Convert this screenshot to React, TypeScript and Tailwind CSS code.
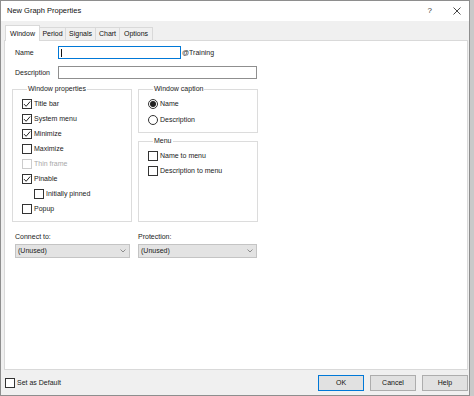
import type { ReactNode } from "react";

const FONT = "font-[family-name:Liberation_Sans,Arial,sans-serif]";

function Box({ checked, disabled }: { checked?: boolean; disabled?: boolean }) {
  return (
    <span
      className={`flex h-[10px] w-[10px] shrink-0 items-center justify-center border bg-white ${
        disabled ? "border-[#cccccc]" : "border-[#333333]"
      }`}
    >
      {checked ? (
        <svg width="8" height="8" viewBox="0 0 8 8" aria-hidden>
          <path d="M1 4.1 L3.1 6.3 L7.2 1.5" fill="none" stroke="#222222" strokeWidth="1" />
        </svg>
      ) : null}
    </span>
  );
}

function Check({
  label,
  checked,
  disabled,
  indent,
}: {
  label: string;
  checked?: boolean;
  disabled?: boolean;
  indent?: boolean;
}) {
  return (
    <div className={`flex h-[15px] items-center gap-[2px] ${indent ? "pl-[12px]" : ""}`}>
      <Box checked={checked} disabled={disabled} />
      <span className={disabled ? "text-[#a8a8a8]" : "text-[#1a1a1a]"}>{label}</span>
    </div>
  );
}

function Radio({ label, checked }: { label: string; checked?: boolean }) {
  return (
    <div className="flex h-[16px] items-center gap-[2px]">
      <span className="flex h-[10px] w-[10px] items-center justify-center rounded-full border border-[#333333] bg-white">
        {checked ? <span className="h-[6px] w-[6px] rounded-full bg-[#222222]" /> : null}
      </span>
      <span className="text-[#1a1a1a]">{label}</span>
    </div>
  );
}

function Group({
  title,
  className,
  children,
}: {
  title: string;
  className: string;
  children: ReactNode;
}) {
  return (
    <fieldset className={`border border-[#dcdcdc] ${className}`}>
      <legend className="ml-[5px] px-[1px] leading-[8px] text-[#1a1a1a]">{title}</legend>
      {children}
    </fieldset>
  );
}

function Select({ width }: { width: string }) {
  return (
    <div
      className={`flex h-[14px] items-center justify-between border border-[#c4c4c4] bg-[#e3e3e3] pl-[2px] pr-[3px] ${width}`}
    >
      <span className="text-[#1a1a1a]">(Unused)</span>
      <svg width="6" height="4" viewBox="0 0 6 4" aria-hidden>
        <path d="M0.5 0.5 L3 3 L5.5 0.5" fill="none" stroke="#777777" strokeWidth="0.8" />
      </svg>
    </div>
  );
}

const TABS = [
  { label: "Period", w: "w-[26px]" },
  { label: "Signals", w: "w-[30px]" },
  { label: "Chart", w: "w-[24px]" },
  { label: "Options", w: "w-[33px]" },
];

export default function App() {
  return (
    <div className={`h-[396px] w-[474px] bg-[#c9c9c9] text-[7px] leading-[8px] ${FONT}`}>
      <div className="flex h-[396px] w-[470px] flex-col border border-[#8e8e8e] bg-[#f0f0f0]">
        {/* title bar */}
        <div className="flex h-[20px] shrink-0 items-center justify-between bg-white pl-[6px] pr-[8px]">
          <span className="text-[7.5px] text-[#111111]">New Graph Properties</span>
          <div className="flex items-center gap-[21px]">
            <span className="text-[8px] text-[#333333]">?</span>
            <svg width="8" height="8" viewBox="0 0 8 8" aria-hidden>
              <path d="M0.5 0.5 L7.5 7.5 M7.5 0.5 L0.5 7.5" stroke="#333333" strokeWidth="0.9" />
            </svg>
          </div>
        </div>

        {/* tabs */}
        <div className="flex h-[19px] shrink-0 items-end pl-[4px]">
          <div className="relative z-10 -mb-px flex h-[16px] w-[35px] items-center justify-center border border-b-0 border-[#d9d9d9] bg-white text-[#111111]">
            Window
          </div>
          {TABS.map((t) => (
            <div
              key={t.label}
              className={`flex h-[13px] items-center justify-center border-r border-t border-[#d9d9d9] text-[#111111] ${t.w}`}
            >
              {t.label}
            </div>
          ))}
        </div>

        {/* panel */}
        <div className="ml-[3px] mr-[1px] flex h-[330px] shrink-0 flex-col border border-[#d9d9d9] bg-white">
          <div className="mt-[5px] flex h-[13px] items-center">
            <span className="w-[53px] pl-[10px] text-[#1a1a1a]">Name</span>
            <div className="flex h-[13px] w-[123px] items-center border border-[#0078d7] pl-[2px]">
              <span className="h-[8px] w-px bg-[#111111]" />
            </div>
            <span className="ml-[1px] text-[#1a1a1a]">@Training</span>
          </div>
          <div className="mt-[7px] flex h-[13px] items-center">
            <span className="w-[53px] pl-[10px] text-[#1a1a1a]">Description</span>
            <div className="h-[13px] w-[199px] border border-[#8f8f8f]" />
          </div>

          <div className="mt-[6px] flex gap-[6px] pl-[7px]">
            <Group title="Window properties" className="h-[137px] w-[120px] pl-[9px] pt-[3px]">
              <Check label="Title bar" checked />
              <Check label="System menu" checked />
              <Check label="Minimize" checked />
              <Check label="Maximize" />
              <Check label="Thin frame" disabled />
              <Check label="Pinable" checked />
              <Check label="Initially pinned" indent />
              <Check label="Popup" />
            </Group>
            <div className="flex flex-col gap-[4px]">
              <Group title="Window caption" className="h-[48px] w-[120px] pl-[9px] pt-[3px]">
                <Radio label="Name" checked />
                <Radio label="Description" />
              </Group>
              <Group title="Menu" className="h-[85px] w-[120px] pl-[9px] pt-[3px]">
                <Check label="Name to menu" />
                <Check label="Description to menu" />
              </Group>
            </div>
          </div>

          <div className="mt-[11px] flex gap-[8px] pl-[10px]">
            <div className="flex w-[115px] flex-col gap-[3px]">
              <span className="text-[#1a1a1a]">Connect to:</span>
              <Select width="w-[115px]" />
            </div>
            <div className="flex w-[119px] flex-col gap-[3px]">
              <span className="text-[#1a1a1a]">Protection:</span>
              <Select width="w-[119px]" />
            </div>
          </div>
        </div>

        {/* bottom bar */}
        <div className="flex flex-1 items-center justify-between pl-[4px] pr-[1px]">
          <div className="flex items-center gap-[2px]">
            <Box />
            <span className="text-[#1a1a1a]">Set as Default</span>
          </div>
          <div className="flex gap-[6px]">
            <button className="flex h-[16px] w-[46px] items-center justify-center border border-[#0078d7] bg-[#e1e1e1] text-[#111111]">
              OK
            </button>
            <button className="flex h-[16px] w-[46px] items-center justify-center border border-[#adadad] bg-[#e1e1e1] text-[#111111]">
              Cancel
            </button>
            <button className="flex h-[16px] w-[46px] items-center justify-center border border-[#adadad] bg-[#e1e1e1] text-[#111111]">
              Help
            </button>
          </div>
        </div>
      </div>
    </div>
  );
}
